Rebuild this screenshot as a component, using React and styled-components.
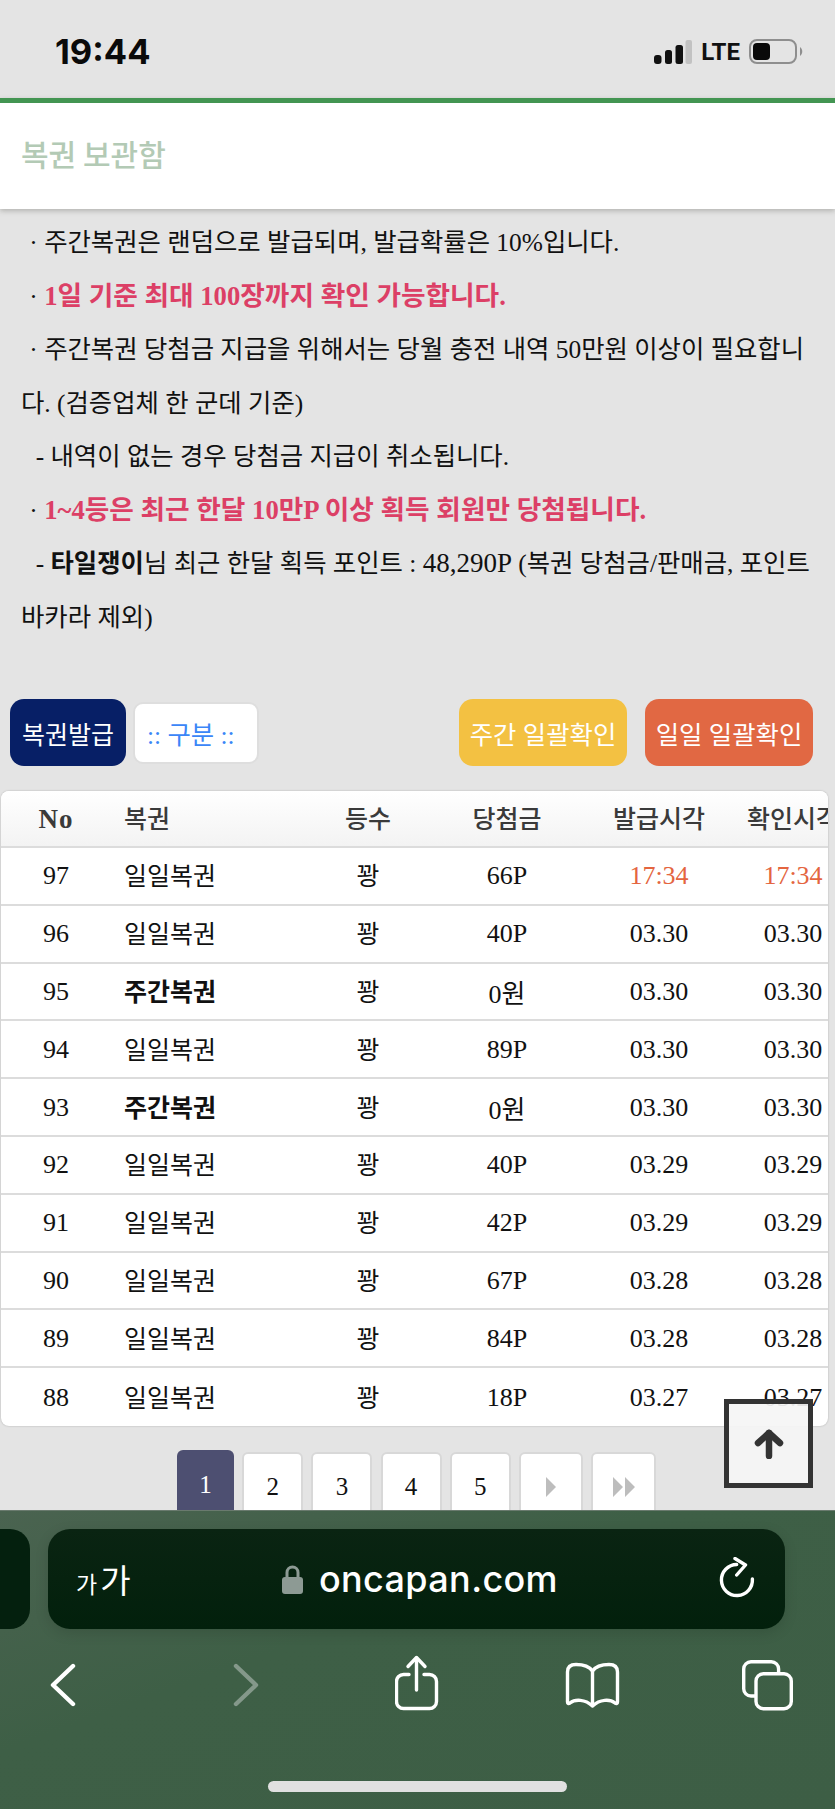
import React from "react";
import styled, { createGlobalStyle } from "styled-components";

const serif = `"Liberation Serif", "Noto Sans CJK KR", serif`;

const GlobalStyle = createGlobalStyle`
    * { box-sizing: border-box; }
    html, body { margin: 0; padding: 0; background: #e4e4e4; }
    body { font-family: ${serif}; }
`;

const Screen = styled.div`
    position: relative;
    width: 835px;
    height: 1809px;
    overflow: hidden;
    background: #e4e4e4;
`;

const StatusBar = styled.div`
    height: 98px;
    padding: 5px 32px 0 55px;
    display: flex;
    justify-content: space-between;
    align-items: center;
`;

const Clock = styled.div`
    font-family: "Inter", "Liberation Sans", sans-serif;
    font-weight: 700;
    font-size: 34.5px;
    color: #0a0a0a;
`;

const StatusIcons = styled.div`
    display: flex;
    align-items: center;
    gap: 9px;
`;

const Lte = styled.span`
    font-family: "Roboto", "Liberation Sans", sans-serif;
    font-weight: 700;
    font-size: 24px;
    color: #111;
`;

const Header = styled.div`
    height: 111px;
    background: #fff;
    border-top: 5px solid #439552;
    box-shadow: 0 2px 5px rgba(90, 90, 80, 0.35);
    padding: 0 0 6px 21px;
    display: flex;
    align-items: center;
    position: relative;
`;

const HeaderTitle = styled.h1`
    margin: 0;
    font-family: "Noto Sans CJK KR", sans-serif;
    font-weight: 500;
    font-size: 30px;
    color: #b3cab5;
`;

const Notes = styled.div`
    padding: 7px 21px 55px;
    font-size: 25.4px;
    line-height: 53.5px;
    color: #111;
    word-break: break-all;
`;

const NoteLine = styled.div`
    text-indent: 2px;
`;

const Strong = styled.b`
    color: #dc3f66;
    font-size: 26.7px;
`;

const Dark = styled.b`
    color: #111;
`;

const Latin = styled.span`
    font-size: 27px;
`;

const Actions = styled.div`
    display: flex;
    align-items: center;
    padding: 0 22px 0 10px;
    height: 67px;
`;

const ActionButton = styled.div`
    height: 67px;
    border-radius: 14px;
    background: ${props => props.bg};
    color: #fff;
    font-size: ${props => props.size || 25.4}px;
    width: ${props => props.w}px;
    display: flex;
    align-items: center;
    justify-content: center;
    margin-left: ${props => props.gap || 0}px;
    white-space: nowrap;
`;

const SortBox = styled.div`
    width: 126px;
    height: 62px;
    margin-left: 7px;
    background: #fff;
    border: 2px solid #dedede;
    border-radius: 10px;
    color: #3b86f7;
    font-size: 25.4px;
    display: flex;
    align-items: center;
    padding-left: 12px;
    white-space: nowrap;
`;

const TableCard = styled.div`
    margin: 25px 7px 0 1px;
    background: #fff;
    border-radius: 8px;
    overflow: hidden;
    box-shadow: 0 0 2px rgba(0, 0, 0, 0.25);
`;

const gridCols = "110px 202px 110px 168px 136px 132px";

const HeadRow = styled.div`
    display: grid;
    grid-template-columns: ${gridCols};
    height: 57px;
    align-items: center;
    background: linear-gradient(#ffffff, #f3f3f3);
    border-bottom: 2px solid #dcdcdc;
    color: #3a3a3a;
    font-size: 25px;
    font-weight: 500;
    white-space: nowrap;
`;

const Row = styled.div`
    display: grid;
    grid-template-columns: ${gridCols};
    height: 57.8px;
    align-items: center;
    border-bottom: ${props => (props.last ? "none" : "2px solid #dcdcdc")};
    color: #111;
    font-size: 25px;
    white-space: nowrap;
`;

const Cell = styled.div`
    text-align: ${props => (props.left ? "left" : "center")};
    padding-left: ${props => (props.left ? "13px" : "0")};
    padding-top: ${props => (props.num ? "1px" : "0")};
    padding-bottom: ${props => (props.num ? "0" : "3px")};
    color: ${props => (props.hot ? "#e4653f" : "inherit")};
    font-weight: ${props => (props.bold ? 700 : "inherit")};
    font-size: ${props => (props.num ? "26px" : "inherit")};
`;

const NoLabel = styled(Cell)`
    font-size: 27px;
    font-weight: 700;
    letter-spacing: 1px;
`;

const Pager = styled.div`
    display: flex;
    align-items: flex-start;
    padding-left: 177px;
    margin-top: 26px;
    gap: 8.2px;
`;

const PageButton = styled.div`
    width: ${props => props.w || 61}px;
    height: 66px;
    padding-top: 5px;
    border-radius: 6px;
    background: ${props => (props.active ? "#4d4f71" : "#fff")};
    color: ${props => (props.active ? "#fff" : "#111")};
    border: ${props => (props.active ? "none" : "2px solid #d8d8d8")};
    font-size: 25px;
    display: flex;
    align-items: center;
    justify-content: center;
    margin-top: ${props => (props.active ? "-2px" : "0")};
`;

const ScrollTop = styled.div`
    position: absolute;
    left: 724px;
    top: 1399px;
    width: 89px;
    height: 89px;
    border: 5px solid #333;
    background: rgba(245, 245, 245, 0.92);
    display: flex;
    align-items: center;
    justify-content: center;
`;

const SafariBar = styled.div`
    position: absolute;
    left: 0;
    right: 0;
    bottom: 0;
    height: 299px;
    background: linear-gradient(160deg, #4a6350 0%, #3e5f46 40%, #3d5e45 100%);
    border-top: 1px solid #6a7a6e;
`;

const SidePill = styled.div`
    position: absolute;
    left: -40px;
    top: 18px;
    width: 70px;
    height: 100px;
    border-radius: 20px;
    background: #04200e;
`;

const UrlPill = styled.div`
    position: absolute;
    left: 48px;
    top: 18px;
    width: 737px;
    height: 100px;
    border-radius: 22px;
    background: linear-gradient(#0a2412, #02200c);
    box-shadow: 0 4px 14px rgba(0, 0, 0, 0.12);
    display: flex;
    align-items: center;
    color: #fff;
    font-family: "Noto Sans CJK KR", sans-serif;
    padding: 0 29px 0 28px;
`;

const TextSize = styled.span`
    width: 206px;
    display: flex;
    align-items: baseline;
    gap: 3px;
`;

const SmallGa = styled.span`
    font-size: 23px;
`;

const BigGa = styled.span`
    font-size: 33px;
`;

const Domain = styled.span`
    font-family: "Inter", "Liberation Sans", sans-serif;
    font-size: 36px;
    font-weight: 500;
    letter-spacing: 0.35px;
    margin-left: 16px;
    flex: 1;
`;

const ToolBar = styled.div`
    position: absolute;
    left: 0;
    right: 0;
    top: 144px;
    height: 60px;
    display: flex;
    padding-left: 50px;
`;

const ToolSlot = styled.div`
    width: ${props => props.w}px;
    display: flex;
    align-items: center;
`;

const HomeBar = styled.div`
    position: absolute;
    left: 268px;
    top: 270px;
    width: 299px;
    height: 11px;
    border-radius: 6px;
    background: #e0e0e0;
`;

const rows = [
    [97, "일일복권", "66P", "17:34", "17:34"],
    [96, "일일복권", "40P", "03.30", "03.30"],
    [95, "주간복권", "0원", "03.30", "03.30"],
    [94, "일일복권", "89P", "03.30", "03.30"],
    [93, "주간복권", "0원", "03.30", "03.30"],
    [92, "일일복권", "40P", "03.29", "03.29"],
    [91, "일일복권", "42P", "03.29", "03.29"],
    [90, "일일복권", "67P", "03.28", "03.28"],
    [89, "일일복권", "84P", "03.28", "03.28"],
    [88, "일일복권", "18P", "03.27", "03.27"],
];

const SignalIcon = () => (
    <svg width="38" height="24" viewBox="0 0 38 24">
        <rect x="0" y="15" width="7.5" height="9" rx="3" fill="#111" />
        <rect x="11" y="10" width="7" height="14" rx="2.5" fill="#111" />
        <rect x="21.5" y="5" width="7.5" height="19" rx="2.5" fill="#111" />
        <rect x="31.5" y="0" width="6.5" height="24" rx="2" fill="#c2c2c2" />
    </svg>
);

const BatteryIcon = () => (
    <svg width="54" height="25" viewBox="0 0 54 25">
        <rect x="1" y="1" width="46" height="23" rx="7" fill="none" stroke="#8e8e8e" strokeWidth="2" />
        <rect x="4" y="4" width="17" height="17" rx="4" fill="#0a0a0a" />
        <path d="M51 8 C54 10 54 15 51 17 Z" fill="#8e8e8e" />
    </svg>
);

const LockIcon = () => (
    <svg width="21" height="29" viewBox="0 0 21 29">
        <path d="M5 13 V7.5 a5.5 5.5 0 0 1 11 0 V13" fill="none" stroke="#8d9a94" strokeWidth="3" />
        <rect x="0" y="12" width="21" height="17" rx="3" fill="#8d9a94" />
    </svg>
);

const ReloadIcon = () => (
    <svg width="38" height="44" viewBox="0 0 38 44" fill="none" stroke="#fff" strokeWidth="3.4" strokeLinecap="round" strokeLinejoin="round">
        <path d="M18.7 7.5 A15.5 15.5 0 1 0 34.4 22" />
        <path d="M17 1.5 L27.5 8 L18.7 18" />
    </svg>
);

const BackIcon = ({ flip, color }) => (
    <svg width="26" height="44" viewBox="0 0 26 44" fill="none" stroke={color} strokeWidth="4.4" strokeLinecap="round" strokeLinejoin="round" style={{ transform: flip ? "scaleX(-1)" : "none" }}>
        <path d="M23 3 L3 22 L23 41" />
    </svg>
);

const ShareIcon = () => (
    <svg width="44" height="60" viewBox="0 0 44 60" fill="none" stroke="#fff" strokeWidth="3.4" strokeLinecap="round" strokeLinejoin="round">
        <path d="M14 19.5 H8.5 a7 7 0 0 0 -7 7 V46.5 a7 7 0 0 0 7 7 H34.5 a7 7 0 0 0 7 -7 V26.5 a7 7 0 0 0 -7 -7 H29" />
        <path d="M21.5 35 V3" />
        <path d="M13 11.5 L21.5 2.5 L30 11.5" />
    </svg>
);

const BookIcon = () => (
    <svg width="55" height="46" viewBox="0 0 55 46" fill="none" stroke="#fff" strokeWidth="3.4" strokeLinecap="round" strokeLinejoin="round">
        <path d="M27.5 9 C24 4 18 2.5 11 2.5 C5 2.5 2.5 5 2.5 10 V40 C2.5 41.5 3.5 42 5 41 C10 37 20 37 27.5 44 C35 37 45 37 50 41 C51.5 42 52.5 41.5 52.5 40 V10 C52.5 5 50 2.5 44 2.5 C37 2.5 31 4 27.5 9 Z" />
        <path d="M27.5 9 V42" />
    </svg>
);

const TabsIcon = () => (
    <svg width="52" height="51" viewBox="0 0 52 51" fill="none" stroke="#fff" strokeWidth="3.4" strokeLinejoin="round">
        <path d="M14 36 H9 a7.3 7.3 0 0 1 -7.3 -7.3 V9 a7.3 7.3 0 0 1 7.3 -7.3 H29.3 a7.3 7.3 0 0 1 7.3 7.3 V13.7" />
        <rect x="14" y="13.7" width="35.3" height="35" rx="7.3" />
    </svg>
);

const App = () => (
    <Screen>
        <GlobalStyle />
        <StatusBar>
            <Clock>19:44</Clock>
            <StatusIcons>
                <SignalIcon />
                <Lte>LTE</Lte>
                <BatteryIcon />
            </StatusIcons>
        </StatusBar>
        <Header>
            <HeaderTitle>복권 보관함</HeaderTitle>
        </Header>
        <Notes>
            <NoteLine>&nbsp;· 주간복권은 랜덤으로 발급되며, 발급확률은 10%입니다.</NoteLine>
            <NoteLine>&nbsp;· <Strong>1일 기준 최대 100장까지 확인 가능합니다.</Strong></NoteLine>
            <NoteLine>&nbsp;· 주간복권 당첨금 지급을 위해서는 당월 충전 내역 50만원 이상이 필요합니다. (검증업체 한 군데 기준)</NoteLine>
            <NoteLine>&nbsp;&nbsp;- 내역이 없는 경우 당첨금 지급이 취소됩니다.</NoteLine>
            <NoteLine>&nbsp;· <Strong>1~4등은 최근 한달 10만P 이상 획득 회원만 당첨됩니다.</Strong></NoteLine>
            <NoteLine>&nbsp;&nbsp;- <Dark>타일쟁이</Dark>님 최근 한달 획득 포인트 : <Latin>48,290P</Latin> (복권 당첨금/판매금, 포인트 바카라 제외)</NoteLine>
        </Notes>
        <Actions>
            <ActionButton bg="#071f66" w={116} size={25}>복권발급</ActionButton>
            <SortBox>:: 구분 ::</SortBox>
            <ActionButton bg="#f3c142" w={168} gap={200}>주간 일괄확인</ActionButton>
            <ActionButton bg="#e16843" w={168} gap={18}>일일 일괄확인</ActionButton>
        </Actions>
        <TableCard>
            <HeadRow>
                <NoLabel num>No</NoLabel>
                <Cell left>복권</Cell>
                <Cell>등수</Cell>
                <Cell>당첨금</Cell>
                <Cell>발급시각</Cell>
                <Cell>확인시각</Cell>
            </HeadRow>
            {rows.map((r, i) => (
                <Row key={r[0]} last={i === rows.length - 1}>
                    <Cell num>{r[0]}</Cell>
                    <Cell left bold={r[1] === "주간복권"}>{r[1]}</Cell>
                    <Cell>꽝</Cell>
                    <Cell num>{r[2]}</Cell>
                    <Cell num hot={i === 0}>{r[3]}</Cell>
                    <Cell num hot={i === 0}>{r[4]}</Cell>
                </Row>
            ))}
        </TableCard>
        <Pager>
            <PageButton active w={57}>1</PageButton>
            <PageButton>2</PageButton>
            <PageButton>3</PageButton>
            <PageButton>4</PageButton>
            <PageButton>5</PageButton>
            <PageButton w={64}>
                <svg width="10" height="20" viewBox="0 0 10 20"><path d="M0 0 L10 10 L0 20 Z" fill="#bdbdbd" /></svg>
            </PageButton>
            <PageButton w={65}>
                <svg width="22" height="20" viewBox="0 0 22 20"><path d="M0 0 L10 10 L0 20 Z M12 0 L22 10 L12 20 Z" fill="#bdbdbd" /></svg>
            </PageButton>
        </Pager>
        <ScrollTop>
            <svg width="30" height="30" viewBox="0 0 30 30" fill="none" stroke="#333" strokeWidth="6.5" strokeLinecap="round" strokeLinejoin="round">
                <path d="M15 27 V4" />
                <path d="M4 14 L15 4 L26 14" />
            </svg>
        </ScrollTop>
        <SafariBar>
            <SidePill />
            <UrlPill>
                <TextSize>
                    <SmallGa>가</SmallGa>
                    <BigGa>가</BigGa>
                </TextSize>
                <LockIcon />
                <Domain>oncapan.com</Domain>
                <ReloadIcon />
            </UrlPill>
            <ToolBar>
                <ToolSlot w={183}><BackIcon color="#fff" /></ToolSlot>
                <ToolSlot w={162}><BackIcon flip color="#84988a" /></ToolSlot>
                <ToolSlot w={170}><ShareIcon /></ToolSlot>
                <ToolSlot w={177}><BookIcon /></ToolSlot>
                <ToolSlot w={52}><TabsIcon /></ToolSlot>
            </ToolBar>
            <HomeBar />
        </SafariBar>
    </Screen>
);

export default App;
